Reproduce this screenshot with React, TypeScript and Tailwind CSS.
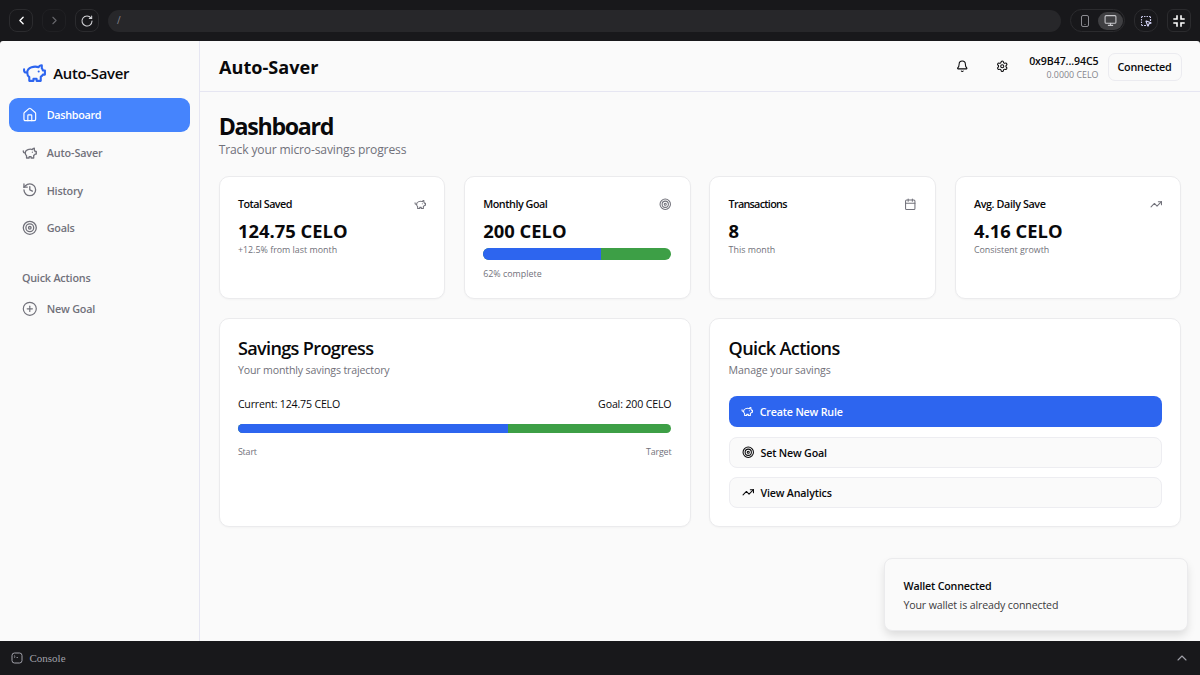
import React from "react";
import { ChevronLeft, ChevronRight, ChevronUp, House, History, Target, CirclePlus, Bell, Settings, Calendar, TrendingUp, Monitor, SquareDashedMousePointer } from "lucide-react";

function Pig({ className }: { className?: string }) {
  return (
    <svg viewBox="0 0 24 24" fill="none" stroke="currentColor" strokeWidth={2} strokeLinecap="round" strokeLinejoin="round" className={className}>
      <path d="M19 5c-1.5 0-2.8 1.4-3 2-3.5-1.5-11-.3-11 5 0 1.8 0 3 2 4.5V20h4v-2h3v2h4v-4c1-.5 1.7-1 2-2h2v-4h-2c0-1-.5-1.5-1-2V5z" />
      <path d="M2 9v1c0 1.1.9 2 2 2h1" />
      <path d="M16 11h.01" />
    </svg>
  );
}

function NavItem({ icon, label, active = false, text }: { icon: React.ReactNode; label: string; active?: boolean; text: string }) {
  return (
    <div className={`flex h-[34.4px] items-center gap-[9.2px] rounded-[9px] px-[12.5px] text-[10.8px] font-semibold ${active ? "bg-[#4584fd] text-white" : "text-[#71717a]"}`}>
      {icon}
      <span className={text}>{label}</span>
    </div>
  );
}

function StatCard({ title, titleClass, icon, value, children }: { title: string; titleClass: string; icon: React.ReactNode; value: string; children: React.ReactNode }) {
  return (
    <div className="h-[123px] min-w-0 flex-1 rounded-[10px] border border-[#ebebed] bg-white px-[18.2px] pt-[19px] shadow-[0_1px_2px_rgba(0,0,0,0.03)]">
      <div className="flex h-[15.6px] items-center justify-between text-[#71717a]">
        <span className={`text-[10.8px] font-semibold text-[#09090b] ${titleClass}`}>{title}</span>
        {icon}
      </div>
      <div className="mt-[6.4px] mb-[0.6px] text-[18.4px] leading-[25px] font-bold">{value}</div>
      {children}
    </div>
  );
}

const chromeButton = "flex h-[23px] w-6 items-center justify-center border";

export default function App() {
  return (
    <div className="flex h-[675px] w-[1200px] flex-col overflow-hidden bg-[#18181b] font-['Open_Sans',sans-serif] text-[#09090b]">
      <div className="flex h-[41px] shrink-0 items-center gap-[9px] px-[9px]">
        <div className={`${chromeButton} rounded-lg border-[#2b2b2e] text-white`}><ChevronLeft className="size-[13px]" strokeWidth={2.5} /></div>
        <div className={`${chromeButton} rounded-lg border-[#202023] text-[#66666b]`}><ChevronRight className="size-[13px]" strokeWidth={2} /></div>
        <div className={`${chromeButton} rounded-lg border-[#2b2b2e] text-[#d4d4d8]`}>
          <svg viewBox="0 0 24 24" className="size-3.5" fill="none" stroke="currentColor" strokeWidth="1.8" strokeLinecap="round">
            <path d="M19 7A8.6 8.6 0 1 0 20.6 12" /><path d="M20 3.5V7.5H16" />
          </svg>
        </div>
        <div className="flex h-[22px] flex-1 items-center rounded-full bg-[#27272a] px-[9px] text-[10px] text-[#85858b]">/</div>
        <div className="flex h-[23px] w-[55px] items-center rounded-full border border-[#2b2b2e]">
          <div className="flex w-[27px] justify-center text-[#8b8b91]">
            <svg viewBox="0 0 12 14" className="h-3.5 w-3" fill="none" stroke="currentColor"><rect x="2.5" y="1.5" width="7" height="11" rx="1.5" /><path d="M5.5 10.5h1" /></svg>
          </div>
          <div className="flex h-[18px] w-[25px] items-center justify-center rounded-full bg-[#3f3f42] text-[#c7c7cb]"><Monitor className="size-[13px]" /></div>
        </div>
        <div className={`${chromeButton} rounded-[10px] border-[#2b2b2e] text-[#d6d6fa]`}><SquareDashedMousePointer className="size-3" strokeWidth={2.3} /></div>
        <div className={`${chromeButton} rounded-md border-[#2b2b2e] text-white`}>
          <svg viewBox="0 0 12 12" className="size-3" fill="none" stroke="currentColor" strokeWidth="1.6"><path d="M4 .3V4H.3M8 .3V4h3.7M4 11.7V8H.3M8 11.7V8h3.7" /></svg>
        </div>
      </div>

      <div className="relative flex h-[600px] shrink-0 rounded-t-[3px] bg-[#fafafa]">
        <aside className="w-[200px] shrink-0 border-r border-[#e6e6f2] px-[9.4px]">
          <div className="flex h-[56.5px] items-center gap-[6.3px] px-[12.5px] pt-[7px]">
            <Pig className="size-[25px] text-[#2d65ef]" />
            <span className="pt-[1.5px] text-[14.9px] font-semibold tracking-[-0.3px]">Auto-Saver</span>
          </div>
          <nav className="flex flex-col gap-[3.3px]">
            <NavItem active icon={<House className="size-[15.6px]" strokeWidth={1.8} />} label="Dashboard" text="pt-px tracking-[-0.3px]" />
            <NavItem icon={<Pig className="size-[15.6px]" />} label="Auto-Saver" text="pt-px tracking-[-0.12px]" />
            <NavItem icon={<History className="size-[15.6px]" />} label="History" text="pt-[2px] tracking-[-0.2px]" />
            <NavItem icon={<Target className="size-[15.6px]" />} label="Goals" text="pt-px tracking-[-0.2px]" />
          </nav>
          <div className="mt-[25.5px] px-[12.5px] text-[10.8px] leading-[15.6px] font-semibold tracking-[-0.2px] text-[#71717a]">Quick Actions</div>
          <div className="mt-[5.8px]"><NavItem icon={<CirclePlus className="size-[15.6px]" strokeWidth={1.8} />} label="New Goal" text="tracking-[-0.2px]" /></div>
        </aside>

        <div className="flex min-w-0 flex-1 flex-col">
          <header className="flex h-[51px] shrink-0 items-center border-b border-[#e6e6f2] pr-[18.5px] pl-[19px]">
            <h1 className="flex-1 pt-[3.5px] text-[18.1px] font-bold">Auto-Saver</h1>
            <Bell className="mr-[28px] size-[12.5px]" />
            <Settings className="mr-[20.5px] size-[12.5px]" />
            <div className="pt-[3px] text-right">
              <div className="text-[10.6px] leading-[14px] font-semibold tracking-[-0.1px]">0x9B47...94C5</div>
              <div className="text-[8.9px] leading-[13px] text-[#85858c]">0.0000 CELO</div>
            </div>
            <div className="mt-[1.5px] ml-[9px] flex h-[28px] w-[74px] items-center justify-center rounded-[7px] border border-[#ebebf0] pt-px text-[10.8px] font-semibold tracking-[-0.2px]">Connected</div>
          </header>

          <main className="pt-[20px] pr-[18.7px] pl-[18.7px]">
            <h2 className="text-[23.2px] leading-[28px] font-bold tracking-[-1.3px]">Dashboard</h2>
            <p className="pt-px text-[12.1px] leading-[18px] tracking-[-0.15px] text-[#71717a]">Track your micro-savings progress</p>

            <div className="mt-[17px] flex gap-[18.75px]">
              <StatCard title="Total Saved" titleClass="tracking-[-0.53px]" icon={<Pig className="size-[12.5px]" />} value="124.75 CELO">
                <p className="text-[8.9px] leading-[12.5px] text-[#71717a]">+12.5% from last month</p>
              </StatCard>
              <StatCard title="Monthly Goal" titleClass="tracking-[-0.47px]" icon={<Target className="size-[12.5px]" />} value="200 CELO">
                <div className="mt-[5.4px] flex h-3 overflow-hidden rounded-full bg-[#3d9f46]"><div className="w-[62.4%] bg-[#2d65ef]" /></div>
                <p className="mt-[8px] text-[8.9px] leading-[12.5px] text-[#71717a]">62% complete</p>
              </StatCard>
              <StatCard title="Transactions" titleClass="tracking-[-0.72px]" icon={<Calendar className="size-[12.5px]" />} value="8">
                <p className="text-[8.9px] leading-[12.5px] text-[#71717a]">This month</p>
              </StatCard>
              <StatCard title="Avg. Daily Save" titleClass="tracking-[-0.4px]" icon={<TrendingUp className="size-[12.5px]" />} value="4.16 CELO">
                <p className="text-[8.9px] leading-[12.5px] text-[#71717a]">Consistent growth</p>
              </StatCard>
            </div>

            <div className="mt-[18.9px] flex gap-[18.75px]">
              <section className="h-[209.5px] min-w-0 flex-1 rounded-[10px] border border-[#ebebed] bg-white px-[18.2px] pt-[20px] shadow-[0_1px_2px_rgba(0,0,0,0.03)]">
                <h3 className="text-[18.1px] leading-[19px] font-semibold tracking-[-0.66px]">Savings Progress</h3>
                <p className="mt-[5px] text-[10.6px] leading-[15.6px] tracking-[-0.14px] text-[#71717a]">Your monthly savings trajectory</p>
                <div className="mt-[18.5px] flex justify-between text-[10.6px] leading-[15.6px]">
                  <span className="tracking-[-0.18px]">Current: 124.75 CELO</span><span className="tracking-[-0.15px]">Goal: 200 CELO</span>
                </div>
                <div className="mt-[11px] flex h-[9.4px] overflow-hidden rounded-full bg-[#3d9f46]"><div className="w-[62.4%] bg-[#2d65ef]" /></div>
                <div className="mt-[13.4px] flex justify-between text-[8.9px] leading-[12.5px] tracking-[-0.15px] text-[#71717a]"><span>Start</span><span>Target</span></div>
              </section>
              <section className="h-[209.5px] min-w-0 flex-1 rounded-[10px] border border-[#ebebed] bg-white px-[18.2px] pt-[20px] shadow-[0_1px_2px_rgba(0,0,0,0.03)]">
                <h3 className="text-[18.1px] leading-[19px] font-semibold tracking-[-0.64px]">Quick Actions</h3>
                <p className="mt-[5px] text-[10.6px] leading-[15.6px] tracking-[-0.08px] text-[#71717a]">Manage your savings</p>
                <div className="mt-[17.5px] flex flex-col gap-[9.4px] text-[10.7px] font-semibold tracking-[-0.18px]">
                  <div className="flex h-[31.2px] items-center gap-[6.2px] rounded-[8px] bg-[#2d65ef] px-[12.5px] text-white"><Pig className="size-[12.5px]" /><span className="pt-px">Create New Rule</span></div>
                  <div className="flex h-[31.2px] items-center gap-[6.4px] rounded-[8px] border border-[#ededf1] bg-[#fafafa] px-[12px]"><Target className="size-[12.5px]" /><span className="pt-px">Set New Goal</span></div>
                  <div className="flex h-[31.2px] items-center gap-[6.4px] rounded-[8px] border border-[#ededf1] bg-[#fafafa] px-[12px]"><TrendingUp className="size-[12.5px]" /><span className="pt-px">View Analytics</span></div>
                </div>
              </section>
            </div>
          </main>
        </div>

        <div className="absolute right-3 bottom-[10px] h-[73px] w-[304px] rounded-[8px] border border-[#ebebed] bg-[#fafafa] px-[18.5px] pt-[20px] shadow-[0_5px_10px_-1px_rgba(0,0,0,0.13)]">
          <div className="text-[10.7px] leading-[15.6px] font-semibold tracking-[-0.18px]">Wallet Connected</div>
          <div className="mt-[3px] text-[10.6px] leading-[15.6px] tracking-[-0.14px] text-[#3a3a3d]">Your wallet is already connected</div>
        </div>
      </div>

      <footer className="flex flex-1 items-center rounded-b-md px-[11px] text-[#a1a1aa]">
        <svg viewBox="0 0 12 12" className="size-3" fill="none" stroke="currentColor"><rect x="1" y="1" width="10" height="10" rx="2.5" /><path d="m3 3.5 1.2 1.1L3 5.7M5.5 5.5H7" strokeWidth=".8" /></svg>
        <span className="ml-[6.5px] flex-1 font-['Liberation_Serif',serif] text-[11px]">Console</span>
        <ChevronUp className="-mr-[1px] size-[16px]" strokeWidth={1.6} />
      </footer>
    </div>
  );
}
